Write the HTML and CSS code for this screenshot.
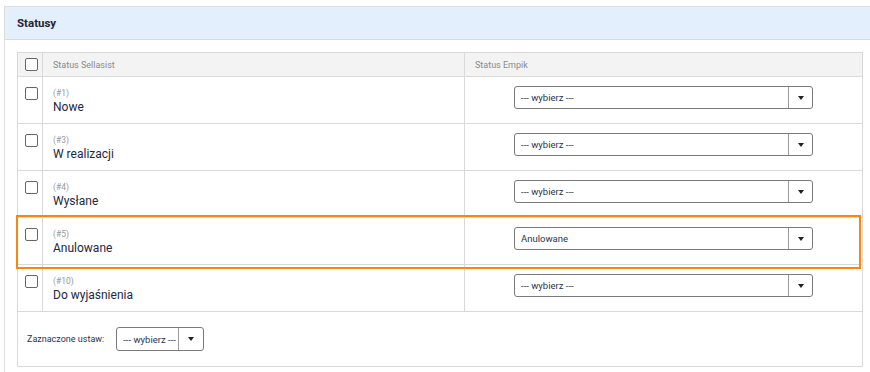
FILE: index.html
```html
<!DOCTYPE html>
<html lang="pl">
<head>
<meta charset="utf-8">
<link rel="stylesheet" href="styles.css">
</head>
<body>
<div class="panel">
  <div class="panel-head">Statusy</div>
  <div class="panel-body">
    <div class="tbl">
      <div class="row head">
        <div class="c-chk"><span class="chk"></span></div>
        <div class="c-name">Status Sellasist</div>
        <div class="c-head">Status Empik</div>
      </div>
      <div class="row">
        <div class="c-chk"><span class="chk"></span></div>
        <div class="c-name"><div class="id">(#1)</div><div class="nm">Nowe</div></div>
        <div class="c-sel"><div class="select"><span class="val">--- wybierz ---</span><span class="arr"><i></i></span></div></div>
      </div>
      <div class="row">
        <div class="c-chk"><span class="chk"></span></div>
        <div class="c-name"><div class="id">(#3)</div><div class="nm">W realizacji</div></div>
        <div class="c-sel"><div class="select"><span class="val">--- wybierz ---</span><span class="arr"><i></i></span></div></div>
      </div>
      <div class="row">
        <div class="c-chk"><span class="chk"></span></div>
        <div class="c-name"><div class="id">(#4)</div><div class="nm">Wysłane</div></div>
        <div class="c-sel"><div class="select"><span class="val">--- wybierz ---</span><span class="arr"><i></i></span></div></div>
      </div>
      <div class="row">
        <div class="c-chk"><span class="chk"></span></div>
        <div class="c-name"><div class="id">(#5)</div><div class="nm">Anulowane</div></div>
        <div class="c-sel"><div class="select"><span class="val">Anulowane</span><span class="arr"><i></i></span></div></div>
      </div>
      <div class="row">
        <div class="c-chk"><span class="chk"></span></div>
        <div class="c-name"><div class="id">(#10)</div><div class="nm">Do wyjaśnienia</div></div>
        <div class="c-sel"><div class="select"><span class="val">--- wybierz ---</span><span class="arr"><i></i></span></div></div>
      </div>
      <div class="foot">
        <span class="foot-label">Zaznaczone ustaw:</span>
        <div class="select small"><span class="val">--- wybierz ---</span><span class="arr"><i></i></span></div>
      </div>
    </div>
  </div>
</div>
<div class="highlight"></div>
</body>
</html>
```
FILE: styles.css
```css
html, body {
  margin: 0;
  padding: 0;
  background: #ffffff;
  overflow: hidden;
}
body {
  font-family: Roboto, "Liberation Sans", Arial, sans-serif;
  color: #1d2740;
  position: relative;
  width: 870px;
  height: 372px;
}
.panel {
  margin: 6px 0 0 4px;
  width: 900px;
  border: 1px solid #dddddd;
  box-sizing: border-box;
}
.panel-head {
  background: #e3effd;
  border-bottom: 1px solid #d6dbe2;
  font-size: 11.5px;
  font-weight: 700;
  color: #1f2533;
  padding-left: 12px;
  display: flex;
  align-items: center;
  box-sizing: border-box;
  height: 33px;
}
.panel-body {
  padding: 12px 0 30px 12px;
}
.tbl {
  width: 846px;
  border: 1px solid #d9d9d9;
  box-sizing: border-box;
}
.row {
  display: grid;
  grid-template-columns: 24px 423px 1fr;
  height: 47px;
  border-bottom: 1px solid #d9d9d9;
  box-sizing: border-box;
}
.row > div {
  box-sizing: border-box;
}
.row .c-name {
  border-left: 1px solid #d9d9d9;
  border-right: 1px solid #d9d9d9;
  padding: 10px 0 0 10px;
}
.row.head {
  height: 24px;
  background: #f3f3f3;
}
.row.head .c-name, .row.head .c-head {
  font-size: 9px;
  color: #8a8a8a;
  padding: 0 0 0 10px;
  display: flex;
  align-items: center;
}
.c-chk {
  padding: 10px 0 0 7px;
}
.row.head .c-chk {
  padding-top: 5px;
}
.chk {
  display: block;
  width: 11px;
  height: 11px;
  border: 1px solid #666666;
  border-radius: 2px;
  background: #fff;
}
.id {
  font-size: 8.5px;
  color: #999999;
  line-height: 12px;
}
.nm {
  font-size: 12px;
  line-height: 16px;
  margin-top: 0;
  color: #1d2740;
}
.c-sel {
  display: flex;
  justify-content: center;
  align-items: flex-start;
  padding-top: 9px;
}
.select {
  width: 299px;
  height: 23px;
  border: 1px solid #7a7a7a;
  border-radius: 3px;
  box-sizing: border-box;
  display: flex;
  align-items: stretch;
  background: #fff;
}
.select .val {
  flex: 1;
  font-size: 9.5px;
  color: #2a3352;
  padding-left: 6px;
  display: flex;
  align-items: center;
}
.select .arr {
  width: 23px;
  border-left: 1px solid #9a9a9a;
  display: flex;
  align-items: center;
  justify-content: center;
}
.select .arr i {
  width: 0;
  height: 0;
  border-left: 3.5px solid transparent;
  border-right: 3.5px solid transparent;
  border-top: 4px solid #222;
}
.foot {
  height: 54px;
  display: flex;
  align-items: center;
  padding-left: 9px;
  gap: 12px;
}
.foot-label {
  font-size: 9px;
  color: #2a3352;
}
.select.small {
  width: 88px;
  height: 24px;
}
.select.small .val {
  padding-left: 6px;
}
.select.small .arr {
  width: 24px;
}
.highlight {
  position: absolute;
  left: 16px;
  top: 215px;
  width: 845px;
  height: 54px;
  border: 2px solid #f7870f;
  box-sizing: border-box;
}
```
